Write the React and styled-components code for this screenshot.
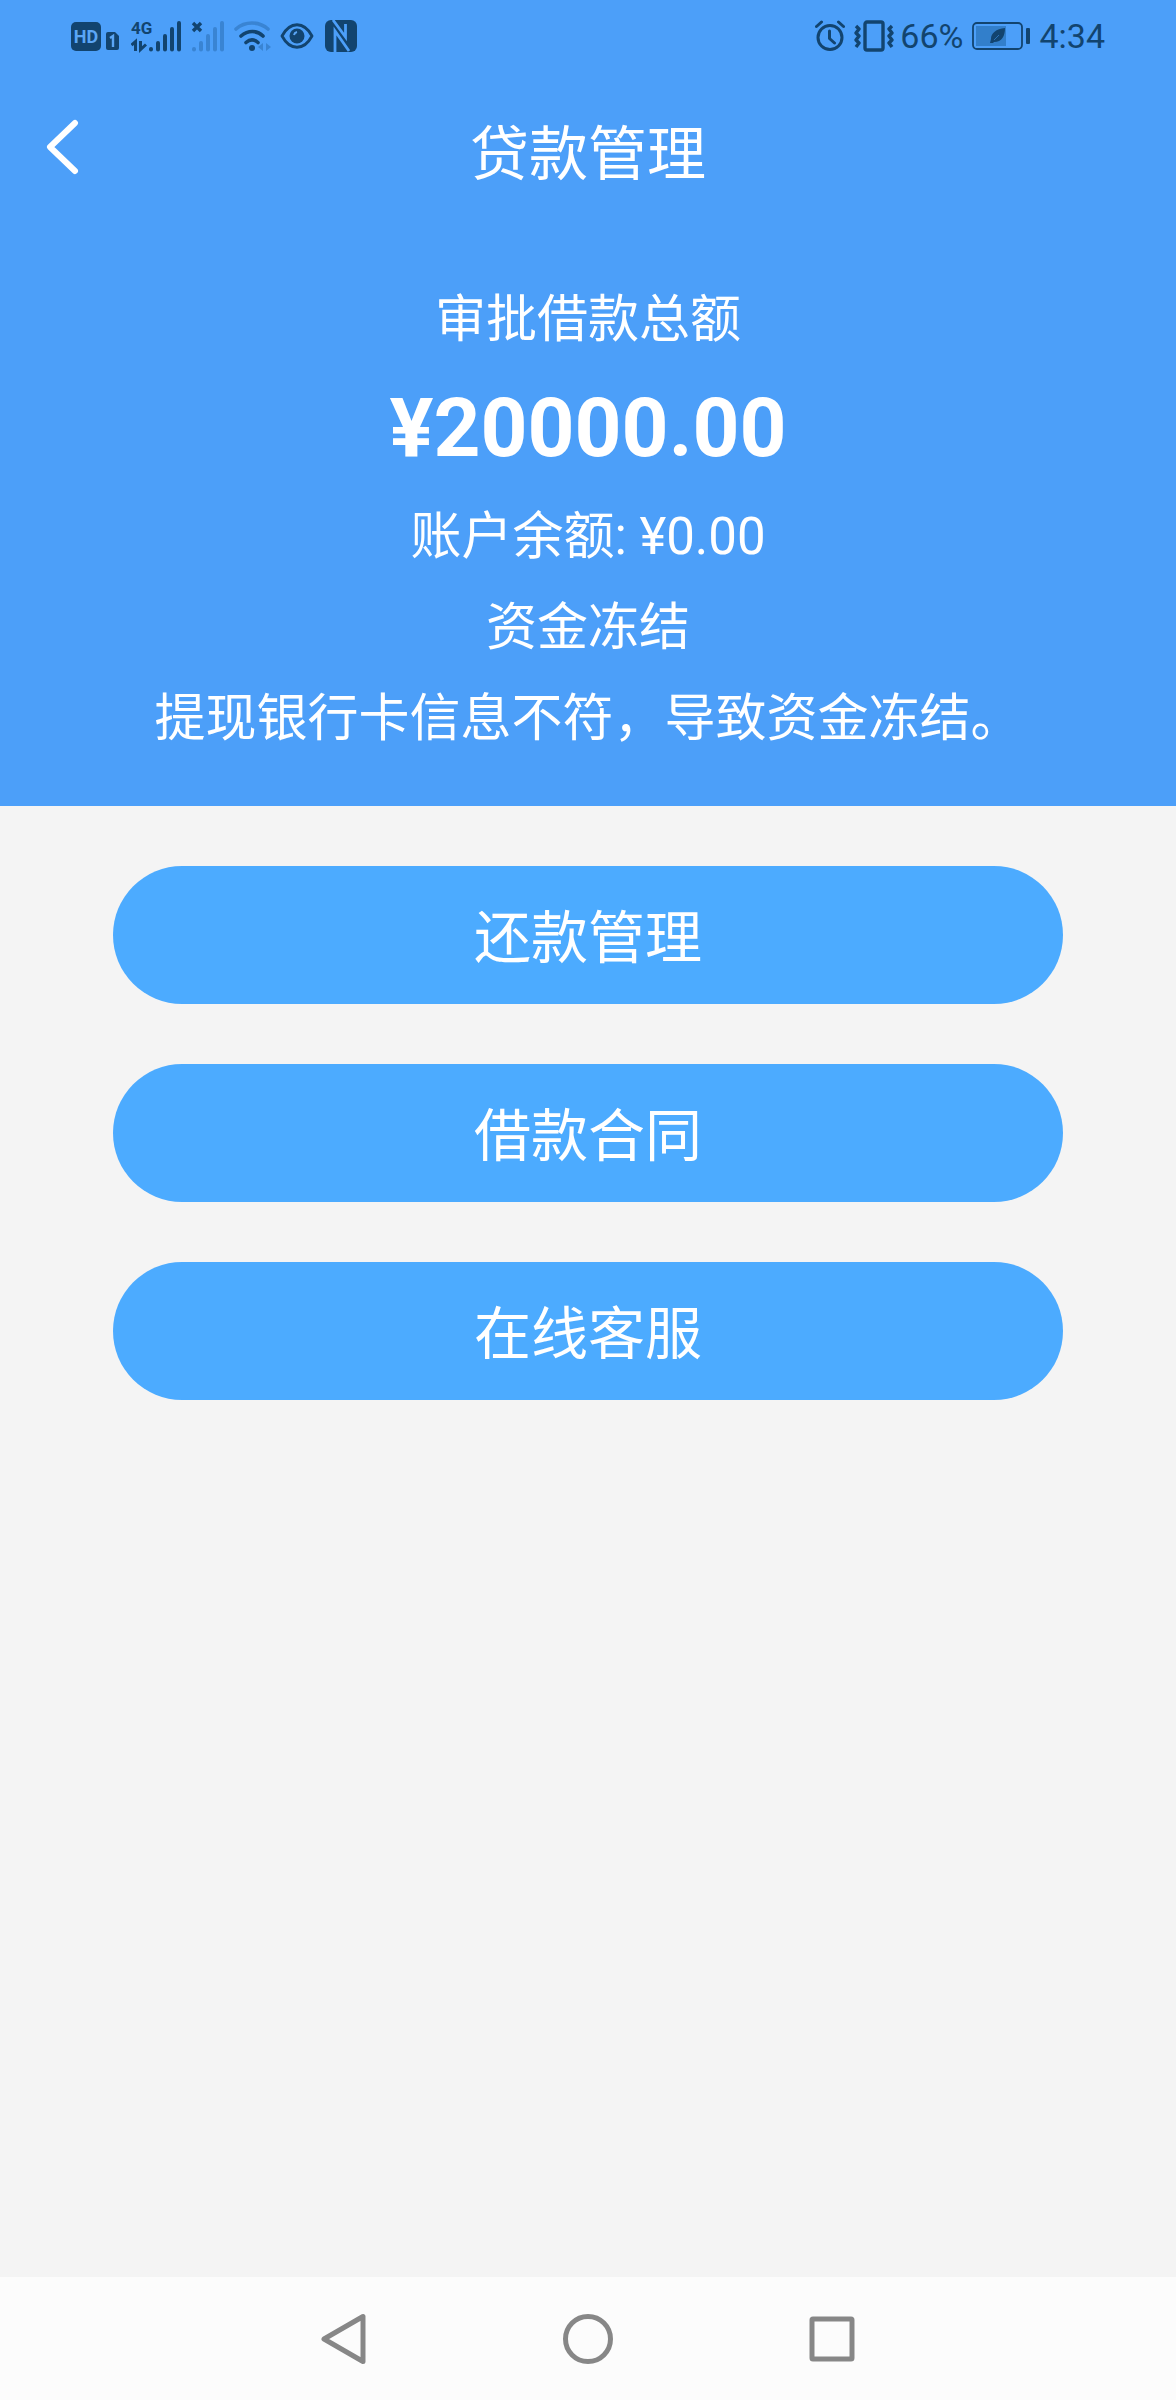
import styled, { createGlobalStyle } from 'styled-components';

const BLUE = '#4c9ff9';
const INK = '#12446f';
const FADED = '#3984d3';

const actions = ['还款管理', '借款合同', '在线客服'];

function HdIcon() {
  return (
    <svg width="49" height="32" viewBox="0 0 49 32" aria-hidden="true">
      <rect x="0" y="2" width="30" height="29" rx="5" fill={INK} />
      <text x="15" y="23" fontSize="18" fontWeight="700" textAnchor="middle" fill="#5ba6f5">HD</text>
      <path d="M35 14a2 2 0 0 1 2-2h7l4 4v12a2 2 0 0 1-2 2h-9a2 2 0 0 1-2-2z" fill={INK} />
      <path d="M39 18l3-2v11" fill="none" stroke="#5ba6f5" strokeWidth="2.4" />
    </svg>
  );
}

function SignalIcon() {
  return (
    <svg width="51" height="34" viewBox="0 0 51 34" aria-hidden="true">
      <text x="0" y="15" fontSize="17" fontWeight="700" fill={INK}>4G</text>
      <g fill="none" stroke={INK} strokeWidth="3">
        <path d="M0.500 26l4-3.500v9.500M9.500 22v8.500l5.500-5" />
      </g>
      <g stroke={INK} strokeWidth="4" strokeLinecap="round">
        <path d="M20 30v0.500M27 24v6.500M34 17v13.500M41 10v20.500M48 4v26.500" />
      </g>
    </svg>
  );
}

function NoSignalIcon() {
  return (
    <svg width="34" height="34" viewBox="0 0 34 34" aria-hidden="true">
      <path d="M2 4l8 8M10 4l-8 8" stroke={INK} strokeWidth="3.4" />
      <g stroke={FADED} strokeWidth="4" strokeLinecap="round">
        <path d="M3 30v0.500M10 24v6.500M17 17v13.500M24 10v20.500M31 4v26.500" />
      </g>
    </svg>
  );
}

function WifiIcon() {
  return (
    <svg width="37" height="32" viewBox="0 0 37 32" aria-hidden="true">
      <g fill="none" strokeWidth="3.6" strokeLinecap="round">
        <path d="M2 9C11 1 25 1 34 9" stroke={FADED} />
        <path d="M7 16C14 10 23 10 29 16M12 22.500C16 19 20 19 24 22.500" stroke={INK} />
      </g>
      <circle cx="18" cy="28" r="3" fill={INK} />
      <path d="M29 23v8l-5-4zM32 23v8l5-4z" fill={FADED} />
    </svg>
  );
}

function EyeIcon() {
  return (
    <svg width="34" height="28" viewBox="0 0 34 28" aria-hidden="true">
      <path d="M2 14C10-1 24-1 32 14C24 29 10 29 2 14z" fill="none" stroke={INK} strokeWidth="2.8" strokeLinejoin="round" />
      <circle cx="17" cy="14" r="7.5" fill={INK} />
      <path d="M14 13a4 4 0 0 1 3-3" fill="none" stroke="#5ba6f5" strokeWidth="2" />
    </svg>
  );
}

function NfcIcon() {
  return (
    <svg width="32" height="32" viewBox="0 0 32 32" aria-hidden="true">
      <rect x="0" y="0" width="32" height="32" rx="6" fill={INK} />
      <path d="M8 0l12.500 17V4M10 32V11l14 20" fill="none" stroke={BLUE} strokeWidth="2.8" />
    </svg>
  );
}

function AlarmIcon() {
  return (
    <svg width="30" height="32" viewBox="0 0 30 32" aria-hidden="true">
      <g fill="none" stroke={INK} strokeWidth="3" strokeLinecap="round" strokeLinejoin="round">
        <circle cx="15" cy="17.500" r="12" />
        <path d="M14.500 11v7.500l5 4.500M1.500 6.500l5-4.500M28.500 6.500l-5-4.500" />
      </g>
    </svg>
  );
}

function VibrateIcon() {
  return (
    <svg width="40" height="32" viewBox="0 0 40 32" aria-hidden="true">
      <g fill="none" stroke={INK} strokeWidth="3.4" strokeLinejoin="round">
        <rect x="11" y="2" width="18" height="28" rx="2" />
        <path d="M2 6l3 3-3 4 3 3-3 4 3 3-3 4M38 6l-3 3 3 4-3 3 3 4-3 3 3 4" />
      </g>
    </svg>
  );
}

function BatteryIcon() {
  return (
    <svg width="58" height="28" viewBox="0 0 58 28" aria-hidden="true">
      <rect x="4" y="4" width="30" height="20" fill="#327fcb" />
      <rect x="1" y="1" width="49" height="26" rx="4" fill="none" stroke={INK} strokeWidth="1.8" />
      <rect x="54" y="6" width="4" height="16" rx="1" fill={INK} />
      <path d="M33 6c-9 1-14 5-14 11l-1 4h3l1-1c8 0 11-6 11-14z" fill={INK} />
      <path d="M22 18l5-5" stroke="#327fcb" strokeWidth="0.8" />
    </svg>
  );
}

function App() {
  return (
    <>
      <GlobalStyle />
      <Screen>
        <Header>
          <StatusBar>
            <HdIcon />
            <Cluster>
              <SignalIcon />
              <NoSignalIcon />
              <WifiIcon />
              <EyeIcon />
            </Cluster>
            <NfcIcon />
            <StatusRight>
              <AlarmIcon />
              <Cluster $gap={6}>
                <VibrateIcon />
                <span>66%</span>
              </Cluster>
              <BatteryIcon />
              <span>4:34</span>
            </StatusRight>
          </StatusBar>
          <TitleBar>
            <BackButton type="button" aria-label="返回">
              <svg width="36" height="56" viewBox="0 0 36 56" aria-hidden="true">
                <path d="M31 4L6 28l25 24" fill="none" stroke="#fff" strokeWidth="6" strokeLinecap="round" strokeLinejoin="round" />
              </svg>
            </BackButton>
            <Title>贷款管理</Title>
          </TitleBar>
          <Summary>
            <Line>审批借款总额</Line>
            <Amount>¥20000.00</Amount>
            <Line>账户余额: ¥0.00</Line>
            <Line>资金冻结</Line>
            <Line>提现银行卡信息不符，导致资金冻结。</Line>
          </Summary>
        </Header>
        <Actions>
          {actions.map((name) => (
            <ActionButton key={name} type="button">{name}</ActionButton>
          ))}
        </Actions>
        <NavBar>
          <NavButton type="button" aria-label="后退">
            <svg width="50" height="54" viewBox="0 0 50 54" aria-hidden="true">
              <path d="M44 4.500v45L5 27z" />
            </svg>
          </NavButton>
          <NavButton type="button" aria-label="主页">
            <svg width="54" height="54" viewBox="0 0 54 54" aria-hidden="true">
              <circle cx="27" cy="27" r="22.500" />
            </svg>
          </NavButton>
          <NavButton type="button" aria-label="最近任务">
            <svg width="54" height="54" viewBox="0 0 54 54" aria-hidden="true">
              <rect x="7" y="7" width="40" height="40" rx="1" />
            </svg>
          </NavButton>
        </NavBar>
      </Screen>
    </>
  );
}

const GlobalStyle = createGlobalStyle`
  * {
    box-sizing: border-box;
  }
  body {
    margin: 0;
    background: #f4f4f4;
    font-family: Roboto, "Noto Sans CJK SC", sans-serif;
  }
  button {
    border: 0;
    padding: 0;
    font-family: inherit;
    cursor: pointer;
  }
  svg {
    display: block;
    flex-shrink: 0;
  }
`;

const Screen = styled.div`
  display: flex;
  flex-direction: column;
  min-height: 100vh;
`;

const Header = styled.header`
  background: ${BLUE};
  color: #fff;
  padding-bottom: 42px;
`;

const StatusBar = styled.div`
  display: flex;
  align-items: center;
  gap: 11px;
  height: 72px;
  padding: 0 71px;
  color: ${INK};
  font-size: 34px;
  line-height: 40px;
`;

const Cluster = styled.div`
  display: flex;
  align-items: center;
  gap: ${(props) => props.$gap || 9}px;
`;

const StatusRight = styled.div`
  display: flex;
  align-items: center;
  gap: 9px;
  margin-left: auto;
`;

const TitleBar = styled.div`
  display: grid;
  grid-template-columns: 1fr auto 1fr;
  align-items: center;
  height: 150px;
  padding: 0 44px;
`;

const BackButton = styled.button`
  justify-self: start;
  background: none;
`;

const Title = styled.h1`
  margin: 0;
  padding-top: 16px;
  font-size: 59px;
  font-weight: 400;
  line-height: 80px;
`;

const Summary = styled.section`
  padding-top: 52px;
  text-align: center;
`;

const Line = styled.p`
  margin: 0;
  font-size: 51px;
  line-height: 91px;
`;

const Amount = styled.p`
  margin: 0;
  font-size: 82px;
  font-weight: 700;
  line-height: 126px;
`;

const Actions = styled.main`
  flex: 1;
  display: flex;
  flex-direction: column;
  gap: 60px;
  padding: 60px 113px;
`;

const ActionButton = styled.button`
  height: 138px;
  padding-bottom: 4px;
  border-radius: 69px;
  background: #4cabff;
  color: #fff;
  font-size: 57px;
`;

const NavBar = styled.nav`
  display: grid;
  grid-template-columns: repeat(3, 1fr);
  height: 123px;
  padding: 0 222px;
  background: #fcfcfc;
`;

const NavButton = styled.button`
  display: flex;
  align-items: center;
  justify-content: center;
  background: none;

  svg {
    fill: none;
    stroke: #878787;
    stroke-width: 5px;
    stroke-linejoin: round;
  }
`;

export default App;
